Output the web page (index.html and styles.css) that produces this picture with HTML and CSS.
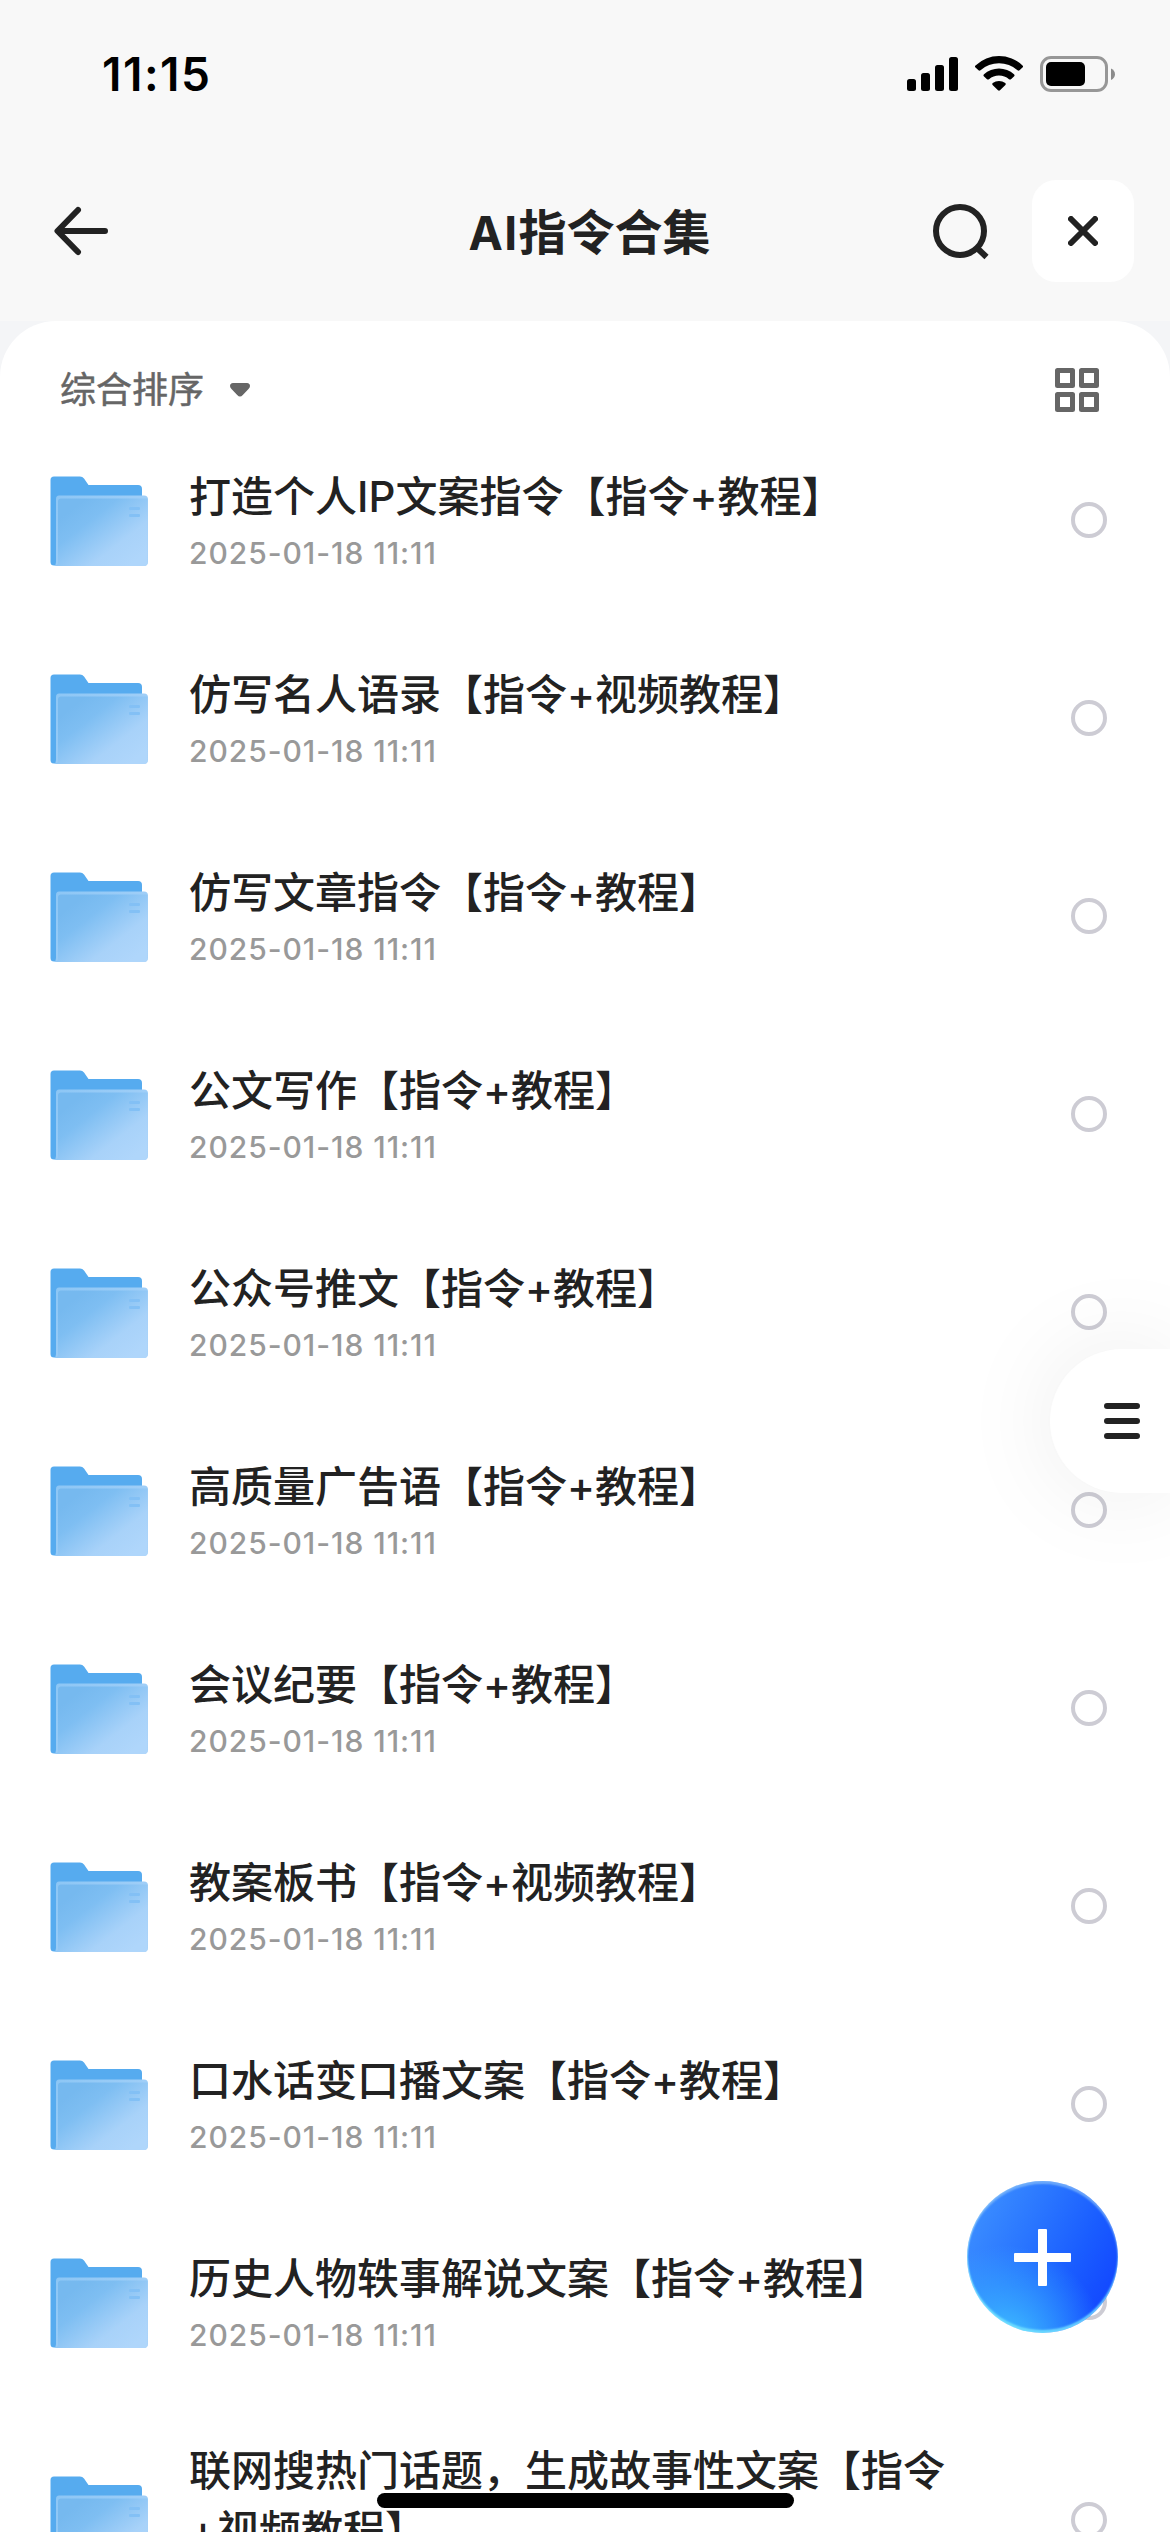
FILE: index.html
```html
<!DOCTYPE html>
<html lang="zh-CN">
<head>
<meta charset="utf-8">
<title>AI指令合集</title>
<link rel="stylesheet" href="styles.css">
</head>
<body>
<svg class="defs" width="0" height="0" aria-hidden="true">
  <defs>
    <linearGradient id="front" x1="0.1" y1="0.25" x2="0.85" y2="0.95">
      <stop offset="0" stop-color="#76b9ef"/>
      <stop offset="0.25" stop-color="#7ebef2"/>
      <stop offset="0.7" stop-color="#a8d2f9"/>
      <stop offset="1" stop-color="#afd6fb"/>
    </linearGradient>
    <linearGradient id="edge" x1="0" y1="0" x2="1" y2="0.6">
      <stop offset="0" stop-color="#8cc6f5"/>
      <stop offset="1" stop-color="#a6d1f8"/>
    </linearGradient>
    <symbol id="folder" viewBox="0 0 98 90">
      <path fill="#56abef" d="M4 0.5H30Q32.500 0.500 34 2.500L38.500 9H88Q92 9 92 13V60L6 89.500H4Q0.500 89.500 0.500 86V4Q0.500 0.500 4 0.500Z"/>
      <path fill="url(#edge)" d="M9 19.500H94Q98 19.500 98 23.500V86Q98 90 94 90H4Q6 89 6 86V23Q6 19.500 9 19.500Z"/>
      <path fill="url(#front)" d="M11 22.500H97.500V86Q97.500 90 94 90H5Q8 89 8 86V25.500Q8 22.500 11 22.500Z"/>
      <rect x="79" y="31" width="11" height="3" rx="1" fill="#83c0f5"/>
      <rect x="79" y="38" width="11" height="3" rx="1" fill="#83c0f5"/>
    </symbol>
  </defs>
</svg>
<div class="screen">
  <div class="status">
    <span class="time">11:15</span>
    <svg class="signals" width="210" height="40" viewBox="0 0 210 40">
      <rect x="2" y="26" width="9" height="12" rx="2.500"/>
      <rect x="16" y="20" width="9" height="18" rx="2.500"/>
      <rect x="30" y="12" width="9" height="26" rx="2.500"/>
      <rect x="44" y="4" width="9" height="34" rx="2.500"/>
      <path d="M70.500 12.500A34 34 0 0 1 117.500 12.500Q118.700 13.500 117.500 14.500L114.500 17.300Q113.500 18 112.500 17.200A28 28 0 0 0 75.500 17.200Q74.500 18 73.500 17.300L70.500 14.500Q69.300 13.500 70.500 12.500Z"/>
      <path d="M79 21.300A22 22 0 0 1 109 21.300Q110.200 22.300 109.200 23.300L106 26.200Q105 27 104 26.200A15.500 15.500 0 0 0 84 26.200Q83 27 82 26.200L78.800 23.300Q77.800 22.300 79 21.300Z"/>
      <path d="M87.700 30A10.500 10.500 0 0 1 100.300 30Q101.300 31 100.400 31.900L95 37.300Q94 38.200 93 37.300L87.600 31.900Q86.700 31 87.700 30Z"/>
      <rect x="136.500" y="4.500" width="65" height="33" rx="9.500" fill="none" stroke="#979797" stroke-width="3"/>
      <rect x="141" y="9" width="39" height="24" rx="5"/>
      <path fill="#8c8c8c" d="M206 15.500Q210 17.500 210 21.200T206 27Z"/>
    </svg>
  </div>
  <header class="nav">
    <svg class="back" width="54" height="54" viewBox="0 0 54 54"><path d="M51 27H4M24 6L3.500 27L24 48"/></svg>
    <h1 class="heading"><span class="latin">AI</span>指令合集</h1>
    <div class="actions">
      <svg class="search" width="58" height="58" viewBox="0 0 58 58"><circle cx="28" cy="29" r="24"/><path d="M45.500 46.500L54.500 55"/></svg>
      <button class="close" aria-label="关闭"><svg width="30" height="30" viewBox="0 0 30 30"><path d="M3 3L27 27M27 3L3 27"/></svg></button>
    </div>
  </header>
  <div class="backdrop">
  <main class="panel">
    <div class="toolbar">
      <span class="sort">综合排序</span>
      <svg class="caret" width="20" height="14" viewBox="0 0 20 14"><path d="M3 0H17Q20 0.300 20 3Q20 4.600 18.500 6L12.800 12Q10 15 7.200 12L1.500 6Q0 4.600 0 3Q0 0.300 3 0Z"/></svg>
      <svg class="grid" width="44" height="44" viewBox="0 0 44 44"><path d="M2.500 2.500h15v15h-15zM26.500 2.500h15v15h-15zM2.500 26.500h15v15h-15zM26.500 26.500h15v15h-15z"/></svg>
    </div>
    <ul class="list">
      <li class="row"><svg class="folder"><use href="#folder"/></svg><div class="info"><div class="name">打造个人IP文案指令【指令+教程】</div><div class="date">2025-01-18 11:11</div></div><span class="radio"></span></li>
      <li class="row"><svg class="folder"><use href="#folder"/></svg><div class="info"><div class="name">仿写名人语录【指令+视频教程】</div><div class="date">2025-01-18 11:11</div></div><span class="radio"></span></li>
      <li class="row"><svg class="folder"><use href="#folder"/></svg><div class="info"><div class="name">仿写文章指令【指令+教程】</div><div class="date">2025-01-18 11:11</div></div><span class="radio"></span></li>
      <li class="row"><svg class="folder"><use href="#folder"/></svg><div class="info"><div class="name">公文写作【指令+教程】</div><div class="date">2025-01-18 11:11</div></div><span class="radio"></span></li>
      <li class="row"><svg class="folder"><use href="#folder"/></svg><div class="info"><div class="name">公众号推文【指令+教程】</div><div class="date">2025-01-18 11:11</div></div><span class="radio"></span></li>
      <li class="row"><svg class="folder"><use href="#folder"/></svg><div class="info"><div class="name">高质量广告语【指令+教程】</div><div class="date">2025-01-18 11:11</div></div><span class="radio"></span></li>
      <li class="row"><svg class="folder"><use href="#folder"/></svg><div class="info"><div class="name">会议纪要【指令+教程】</div><div class="date">2025-01-18 11:11</div></div><span class="radio"></span></li>
      <li class="row"><svg class="folder"><use href="#folder"/></svg><div class="info"><div class="name">教案板书【指令+视频教程】</div><div class="date">2025-01-18 11:11</div></div><span class="radio"></span></li>
      <li class="row"><svg class="folder"><use href="#folder"/></svg><div class="info"><div class="name">口水话变口播文案【指令+教程】</div><div class="date">2025-01-18 11:11</div></div><span class="radio"></span></li>
      <li class="row"><svg class="folder"><use href="#folder"/></svg><div class="info"><div class="name">历史人物轶事解说文案【指令+教程】</div><div class="date">2025-01-18 11:11</div></div><span class="radio"></span></li>
      <li class="row row-tall"><svg class="folder"><use href="#folder"/></svg><div class="info"><div class="name">联网搜热门话题，生成故事性文案【指令<br>+视频教程】</div></div><span class="radio"></span></li>
    </ul>
  </main>
  </div>
  <button class="drawer" aria-label="菜单"><svg width="36" height="36" viewBox="0 0 36 36"><path d="M3 3H33M3 18H33M3 33H33"/></svg></button>
  <button class="fab" aria-label="添加"><svg width="57" height="57" viewBox="0 0 57 57"><rect x="24" width="9" height="57" rx="1"/><rect y="24" width="57" height="9" rx="1"/></svg></button>
  <div class="home"></div>
</div>
</body>
</html>
```
FILE: styles.css
```css
* { box-sizing: border-box; }
body { margin: 0; }
button { border: 0; padding: 0; }
svg { display: block; flex: none; }
.defs { position: absolute; }

.screen {
  position: relative;
  width: 1170px;
  height: 2532px;
  overflow: hidden;
  display: flex;
  flex-direction: column;
  background: #f8f8f8;
  color: #222;
  font-family: Inter, "Noto Sans CJK SC", sans-serif;
}

.status {
  height: 141px;
  flex: none;
  display: flex;
  justify-content: space-between;
  align-items: flex-start;
  padding: 53px 55px 0 102px;
  color: #000;
}
.time { font-size: 46px; font-weight: 600; line-height: 43px; letter-spacing: 1.5px; }

.nav {
  height: 180px;
  flex: none;
  display: grid;
  grid-template-columns: 1fr auto 1fr;
  align-items: center;
  padding: 0 36px 0 54px;
}
.back, .search, .close svg { fill: none; stroke: #222; stroke-width: 6; stroke-linecap: round; stroke-linejoin: round; }
.search { stroke-linecap: butt; }
.heading { margin: 3px 9px 0 0; font-size: 48px; font-weight: 700; line-height: 60px; }
.latin { font-size: 46px; letter-spacing: 1.3px; }
.actions { display: flex; justify-content: flex-end; align-items: center; gap: 42px; }
.close {
  width: 102px;
  height: 102px;
  border-radius: 24px;
  background: #fff;
  display: flex;
  align-items: center;
  justify-content: center;
}

.backdrop { flex: 1; min-height: 0; background: #f4f5f7; }
.panel { height: 100%; background: #fff; border-radius: 56px 56px 0 0; overflow: hidden; }
.toolbar {
  height: 100px;
  display: flex;
  align-items: center;
  padding: 38px 71px 0 60px;
  color: #666;
}
.sort { font-size: 36px; line-height: 44px; -webkit-text-stroke: 0.5px #666; }
.caret { margin-left: 26px; fill: #666; }
.grid { margin-left: auto; fill: none; stroke: #666; stroke-width: 5; stroke-linejoin: round; }

.list { margin: 0; padding: 0; list-style: none; }
.row {
  height: 198px;
  display: flex;
  align-items: center;
  padding: 0 63px 0 50px;
}
.folder { width: 98px; height: 90px; position: relative; top: 1px; }
.info { flex: 1; margin-left: 41px; padding-top: 4px; white-space: nowrap; }
.name { font-size: 42px; font-weight: 500; line-height: 60px; }
.date { margin-top: 1px; font-size: 30px; font-weight: 500; line-height: 50px; letter-spacing: 0.95px; color: #999; }
.radio { width: 36px; height: 36px; border: 4px solid #cdccd4; border-radius: 50%; }
.row-tall { height: 238px; }
.row-tall .info { align-self: flex-start; padding-top: 40px; }

.drawer {
  position: absolute;
  top: 1349px;
  right: 0;
  width: 120px;
  height: 144px;
  padding-left: 54px;
  border-radius: 72px 0 0 72px;
  background: #fff;
  box-shadow: 0 0 100px rgba(0, 0, 0, 0.08);
}
.drawer svg { stroke: #222; stroke-width: 6; stroke-linecap: round; }

.fab {
  position: absolute;
  top: 2181px;
  left: 967px;
  width: 151px;
  height: 152px;
  border-radius: 50%;
  display: flex;
  align-items: center;
  justify-content: center;
  background:
    radial-gradient(circle at 25% 108%, #42c5ff 0, rgba(58, 180, 255, 0.7) 20%, rgba(50, 150, 255, 0) 50%),
    linear-gradient(118deg, #3a8cff 12%, #2a76ff 38%, #1a5dff 65%, #1246ff 90%);
  box-shadow: inset 0 3px 2px rgba(135, 190, 250, 0.7), inset 0 -3px 2px rgba(120, 230, 255, 0.8), inset 1px 0 1px rgba(140, 225, 255, 0.7);
}
.fab svg { fill: #fff; }

.home {
  position: absolute;
  left: 377px;
  top: 2493px;
  width: 417px;
  height: 15px;
  border-radius: 8px;
  background: #000;
}
```
